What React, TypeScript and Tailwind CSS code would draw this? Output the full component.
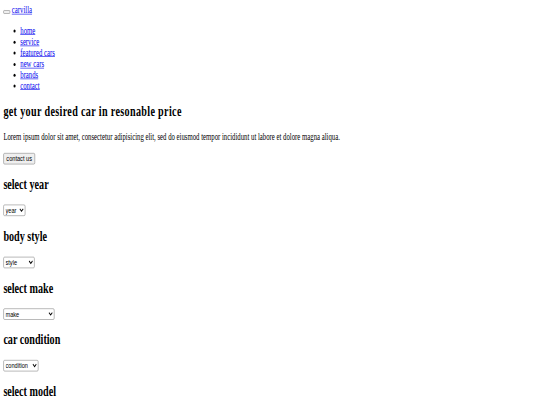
const navLinks = ["home", "service", "featured cars", "new cars", "brands", "contact"];

const searches = [
  { title: "select year", options: ["year", "2018", "2017", "2016"], width: "w-[52px]" },
  { title: "body style", options: ["style", "sedan", "van", "roadster"], width: "w-[74px]" },
  { title: "select make", options: ["make", "toyota", "holden", "maecedes-benz."], width: "w-[121px]" },
  { title: "car condition", options: ["condition", "something", "something"], width: "w-[83px]" },
  { title: "select model", options: ["model", "kia-rio", "mitsubishi", "ford"], width: "w-[74px]" },
];

function Heading({ children, wide }: { children: React.ReactNode; wide?: boolean }) {
  return (
    <h2 className={`text-[24px] font-bold leading-[1.15] my-[19.92px] ${wide ? "tracking-[0.8px]" : ""}`}>
      {children}
    </h2>
  );
}

export default function App() {
  return (
    <div className="w-[540px] h-[405px] overflow-hidden bg-white">
      <div className="w-[1280px] origin-top-left scale-x-[0.4219] scale-y-[0.6] p-2 text-black text-[16px] leading-[1.15] font-['Liberation_Serif',serif]">
        <nav>
          <div>
            <button
              type="button"
              className="inline-block align-baseline w-[16px] h-[6px] bg-[#efefef] border border-[#767676] rounded-[2px]"
            ></button>{" "}
            <a href="#" className="text-[#0000ee] underline">
              carvilla
            </a>
          </div>
          <ul className="list-disc pl-10 my-4">
            {navLinks.map((l) => (
              <li key={l}>
                <a href="#" className="text-[#0000ee] underline">
                  {l}
                </a>
              </li>
            ))}
          </ul>
        </nav>

        <section>
          <Heading wide>get your desired car in resonable price</Heading>
          <p className="my-4">
            Lorem ipsum dolor sit amet, consectetur adipisicing elit, sed do eiusmod tempor incididunt ut labore et
            dolore magna aliqua.
          </p>
          <button className="px-[6px] py-[1px] bg-[#efefef] border border-[#767676] rounded-[3px] text-[13.333px] font-['Liberation_Sans',Arial,sans-serif]">
            contact us
          </button>
        </section>

        <div>
          {searches.map((s) => (
            <div key={s.title}>
              <Heading>{s.title}</Heading>
              <div>
                <select
                  className={`${s.width} h-[19px] bg-white border border-[#767676] rounded-[3px] text-[13.333px] font-['Liberation_Sans',Arial,sans-serif]`}
                  defaultValue={s.options[0]}
                >
                  {s.options.map((o, i) => (
                    <option key={i} value={i === 0 ? o : o + i}>
                      {o}
                    </option>
                  ))}
                </select>
              </div>
            </div>
          ))}
        </div>
      </div>
    </div>
  );
}
